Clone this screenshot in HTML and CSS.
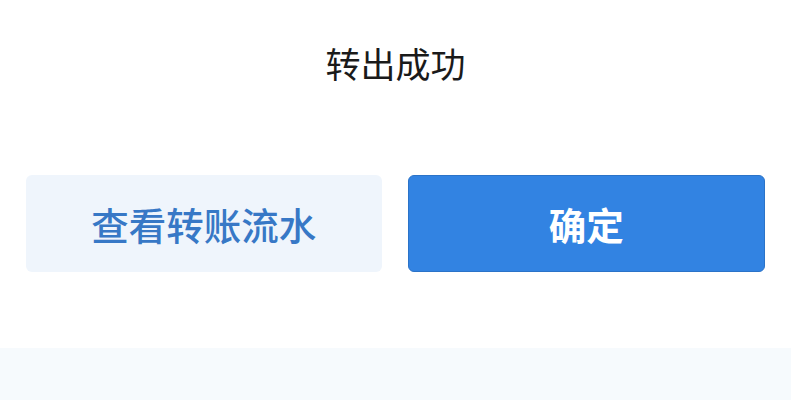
FILE: index.html
```html
<!DOCTYPE html>
<html lang="zh">
<head>
<meta charset="utf-8">
<link rel="stylesheet" href="styles.css">
</head>
<body>
<div class="page">
  <div class="title">转出成功</div>
  <div class="actions">
    <button class="btn btn-light">查看转账流水</button>
    <button class="btn btn-primary">确定</button>
  </div>
  <div class="footer"></div>
</div>
</body>
</html>
```
FILE: styles.css
```css
html, body {
  margin: 0;
  padding: 0;
  background: #ffffff;
}
.page {
  width: 791px;
  height: 400px;
  display: flex;
  flex-direction: column;
  font-family: "Noto Sans CJK SC", "Noto Sans", sans-serif;
  overflow: hidden;
}
.title {
  height: 124px;
  display: flex;
  align-items: center;
  justify-content: center;
  font-size: 35px;
  color: #1a1a1a;
  padding-bottom: 0;
  box-sizing: border-box;
}
.actions {
  display: flex;
  gap: 26px;
  padding: 51px 26px 0 26px;
}
.btn {
  flex: 1;
  height: 97px;
  border-radius: 6px;
  font-family: inherit;
  font-size: 37.5px;
  display: flex;
  align-items: center;
  justify-content: center;
  padding: 0;
  cursor: pointer;
}
.btn-light {
  background: #eff5fc;
  color: #3778c6;
  border: none;
  font-weight: 500;
}
.btn-primary {
  background: #3283e2;
  color: #ffffff;
  border: 1px solid #2b73c8;
  font-weight: 700;
}
.footer {
  margin-top: 76px;
  flex: 1;
  background: #f6fafd;
}
```
